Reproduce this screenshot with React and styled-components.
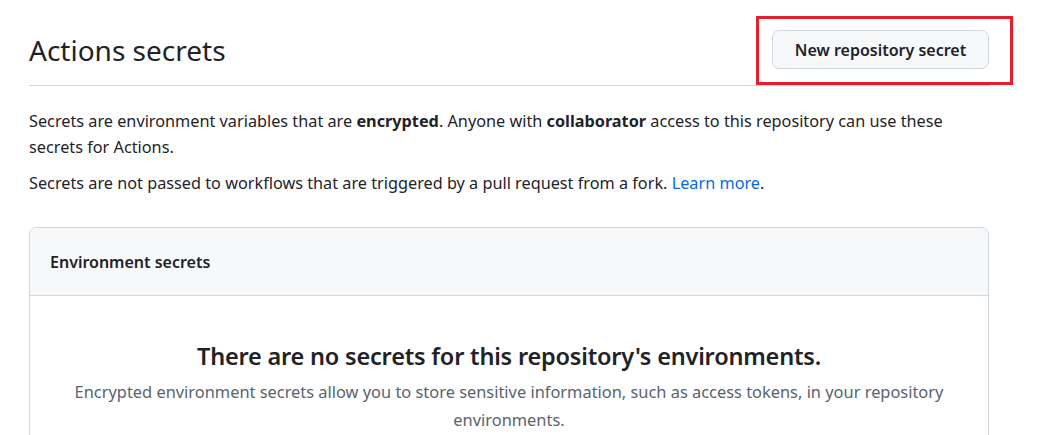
import React from "react";
import styled, { createGlobalStyle } from "styled-components";

const Global = createGlobalStyle`
  html, body { margin: 0; padding: 0; background: #ffffff; }
  body {
    font-family: "Noto Sans", "Open Sans", Arial, sans-serif;
    color: #1f2328;
    -webkit-font-smoothing: antialiased;
  }
`;

const Page = styled.div`
  width: 960px;
  margin-left: 29px;
  padding-top: 16px;
`;

const Subhead = styled.div`
  display: flex;
  align-items: center;
  justify-content: space-between;
  padding: 14px 0 16px;
  border-bottom: 1px solid #d1d9e0;
`;

const Title = styled.h2`
  margin: 0;
  font-size: 28px;
  font-weight: 400;
  line-height: 36px;
`;

const ActionWrap = styled.div`
  position: relative;
`;

const Highlight = styled.div`
  position: absolute;
  left: -16px;
  right: -24px;
  top: -14px;
  bottom: -16px;
  border: 3px solid #e41f2d;
  pointer-events: none;
`;

const Button = styled.button`
  display: flex;
  align-items: center;
  justify-content: center;
  width: 217px;
  height: 39px;
  padding: 0 16px;
  background: #f6f8fa;
  border: 1px solid #d1d9e0;
  border-radius: 7px;
  font-family: inherit;
  font-size: 16px;
  font-weight: 600;
  color: #1f2328;
  cursor: pointer;
`;

const Text = styled.p`
  margin: ${(p) => p.$mt || 0}px 0 0;
  font-size: 16.25px;
  line-height: 26px;
`;

const Link = styled.a`
  color: #0969da;
  text-decoration: none;
`;

const Box = styled.div`
  margin-top: 31px;
  border: 1px solid #d1d9e0;
  border-radius: 7px;
  overflow: hidden;
`;

const BoxHeader = styled.div`
  display: flex;
  align-items: center;
  height: 67px;
  padding: 0 20px;
  background: #f6f8fa;
  border-bottom: 1px solid #d1d9e0;
`;

const BoxTitle = styled.h3`
  margin: 0;
  font-size: 16px;
  font-weight: 600;
`;

const Blank = styled.div`
  display: flex;
  flex-direction: column;
  align-items: center;
  text-align: center;
  padding: 42px 40px 40px;
`;

const BlankTitle = styled.h3`
  margin: 0;
  font-size: 23.5px;
  font-weight: 600;
  line-height: 36px;
  letter-spacing: -0.2px;
`;

const BlankText = styled.p`
  margin: 4px 0 0;
  max-width: 880px;
  font-size: 16.4px;
  line-height: 28px;
  color: #59636e;
`;

export default function App() {
  return (
    <>
      <Global />
      <Page>
        <Subhead>
          <Title>Actions secrets</Title>
          <ActionWrap>
            <Button>New repository secret</Button>
            <Highlight />
          </ActionWrap>
        </Subhead>
        <Text $mt={22}>
          Secrets are environment variables that are <strong>encrypted</strong>. Anyone with{" "}
          <strong>collaborator</strong> access to this repository can use these secrets for Actions.
        </Text>
        <Text $mt={10}>
          Secrets are not passed to workflows that are triggered by a pull request from a fork.{" "}
          <Link href="#">Learn more</Link>.
        </Text>
        <Box>
          <BoxHeader>
            <BoxTitle>Environment secrets</BoxTitle>
          </BoxHeader>
          <Blank>
            <BlankTitle>There are no secrets for this repository's environments.</BlankTitle>
            <BlankText>
              Encrypted environment secrets allow you to store sensitive information, such as access
              tokens, in your repository environments.
            </BlankText>
          </Blank>
        </Box>
      </Page>
    </>
  );
}
